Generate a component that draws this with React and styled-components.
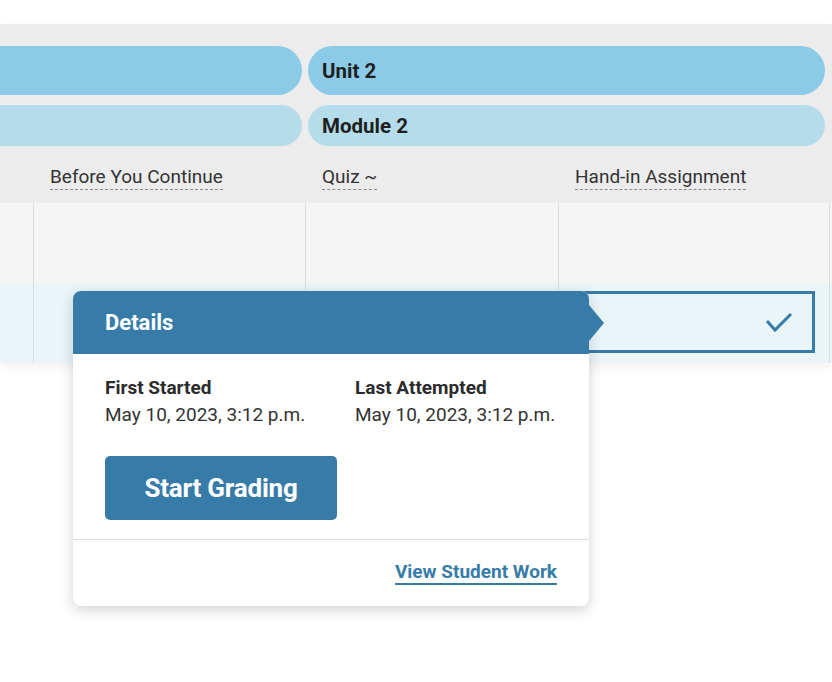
import React from 'react'
import styled, { createGlobalStyle } from 'styled-components'

const GlobalStyle = createGlobalStyle`
  html, body {
    margin: 0;
    padding: 0;
    background: #fff;
    font-family: Roboto, "Liberation Sans", sans-serif;
    color: #333;
  }
`

const Page = styled.div`
  position: relative;
  width: 832px;
  height: 682px;
  padding-top: 24px;
  box-sizing: border-box;
  overflow: hidden;
`

const Table = styled.div`
  overflow: hidden;
  box-shadow: 0 4px 10px rgba(0, 0, 0, 0.06);
`

const Header = styled.div`
  background: #ececec;
  padding-top: 22px;
`

const GridRow = styled.div`
  display: grid;
  grid-template-columns: 33px 272px 253px 271px 1fr;
  margin-top: ${p => p.$gap || 0}px;
  height: ${p => p.$height}px;
`

const Pill = styled.div`
  grid-column: ${p => p.$span};
  display: flex;
  align-items: center;
  padding-left: 14px;
  margin: 0 ${p => p.$right || 3}px 0 ${p => p.$left || 3}px;
  border-radius: ${p => p.$height / 2}px;
  background: ${p => p.$color};
  font-size: 20.5px;
  font-weight: 700;
  color: #1f1f1f;
`

const LabelCell = styled.div`
  display: flex;
  align-items: flex-end;
  padding: 0 0 13px 17px;
`

const Label = styled.span`
  font-size: 19px;
  line-height: 22px;
  color: #333;
  padding-bottom: 1px;
  border-bottom: 1px dashed #8a8a8a;
  white-space: nowrap;
`

const BodyRow = styled.div`
  display: grid;
  grid-template-columns: 33px 272px 253px 271px 1fr;
  height: 80px;
  background: ${p => p.$bg};
`

const Cell = styled.div`
  border-left: ${p => (p.$first ? 'none' : '1px solid #dcdcdc')};
  box-sizing: border-box;
  padding: ${p => (p.$selected ? '8px 14px 10px 10px' : '0')};
`

const Selected = styled.div`
  height: 100%;
  box-sizing: border-box;
  border: 3px solid #377ca8;
  display: flex;
  align-items: center;
  justify-content: flex-end;
  padding-right: 19px;
`

const Popover = styled.div`
  position: absolute;
  left: 73px;
  top: 291px;
  width: 516px;
  background: #fff;
  border-radius: 8px;
  box-shadow: 0 4px 14px rgba(0, 0, 0, 0.18);
`

const PopHeader = styled.div`
  position: relative;
  height: 63px;
  background: #377ca8;
  border-radius: 8px 8px 0 0;
  display: flex;
  align-items: center;
  padding-left: 32px;
  color: #fff;
  font-size: 22px;
  font-weight: 700;

  &::after {
    content: '';
    position: absolute;
    right: -15px;
    top: 14px;
    border-left: 15px solid #377ca8;
    border-top: 18px solid transparent;
    border-bottom: 18px solid transparent;
  }
`

const PopBody = styled.div`
  padding: 20px 32px 19px;
  border-bottom: 1px solid #dcdcdc;
`

const InfoGrid = styled.div`
  display: grid;
  grid-template-columns: 250px 1fr;
  font-size: 19px;
  line-height: 27px;
`

const InfoTitle = styled.div`
  font-weight: 700;
  color: #2b2b2b;
`

const PrimaryButton = styled.button`
  display: block;
  margin-top: 28px;
  width: 232px;
  height: 64px;
  border: none;
  border-radius: 5px;
  background: #377ca8;
  color: #fff;
  font-family: inherit;
  font-size: 26px;
  font-weight: 700;
  letter-spacing: -0.2px;
`

const PopFooter = styled.div`
  height: 66px;
  display: flex;
  align-items: center;
  justify-content: flex-end;
  padding-right: 32px;
`

const Link = styled.a`
  color: #377ca8;
  font-size: 19px;
  font-weight: 700;
  text-decoration: none;
  border-bottom: 2px solid #377ca8;
  line-height: 22px;
`

const Check = () => (
  <svg width="28" height="22" viewBox="0 0 28 22" fill="none">
    <path d="M2 10 L10 19 L26 3" stroke="#377ca8" strokeWidth="3" />
  </svg>
)

const labels = ['', 'Before You Continue', 'Quiz ~', 'Hand-in Assignment', '']

export default function App() {
  return (
    <Page>
      <GlobalStyle />
      <Table>
        <Header>
          <GridRow $height={49}>
            <Pill $span="1 / 3" $left={-40} $height={49} $color="#8bcbe8" />
            <Pill $span="3 / 5" $right={4} $height={49} $color="#8bcbe8">Unit 2</Pill>
          </GridRow>
          <GridRow $height={41} $gap={10}>
            <Pill $span="1 / 3" $left={-40} $height={41} $color="#b4dcea" />
            <Pill $span="3 / 5" $right={4} $height={41} $color="#b4dcea">Module 2</Pill>
          </GridRow>
          <GridRow $height={57}>
            {labels.map((l, i) => (
              <LabelCell key={i}>{l && <Label>{l}</Label>}</LabelCell>
            ))}
          </GridRow>
        </Header>
        <BodyRow $bg="#f5f5f5">
          {labels.map((_, i) => <Cell key={i} $first={i === 0} />)}
        </BodyRow>
        <BodyRow $bg="#eaf5fa">
          {labels.map((_, i) => (
            <Cell key={i} $first={i === 0} $selected={i === 3}>
              {i === 3 && <Selected><Check /></Selected>}
            </Cell>
          ))}
        </BodyRow>
      </Table>

      <Popover>
        <PopHeader>Details</PopHeader>
        <PopBody>
          <InfoGrid>
            <div>
              <InfoTitle>First Started</InfoTitle>
              <div>May 10, 2023, 3:12 p.m.</div>
            </div>
            <div>
              <InfoTitle>Last Attempted</InfoTitle>
              <div>May 10, 2023, 3:12 p.m.</div>
            </div>
          </InfoGrid>
          <PrimaryButton>Start Grading</PrimaryButton>
        </PopBody>
        <PopFooter>
          <Link href="#">View Student Work</Link>
        </PopFooter>
      </Popover>
    </Page>
  )
}
